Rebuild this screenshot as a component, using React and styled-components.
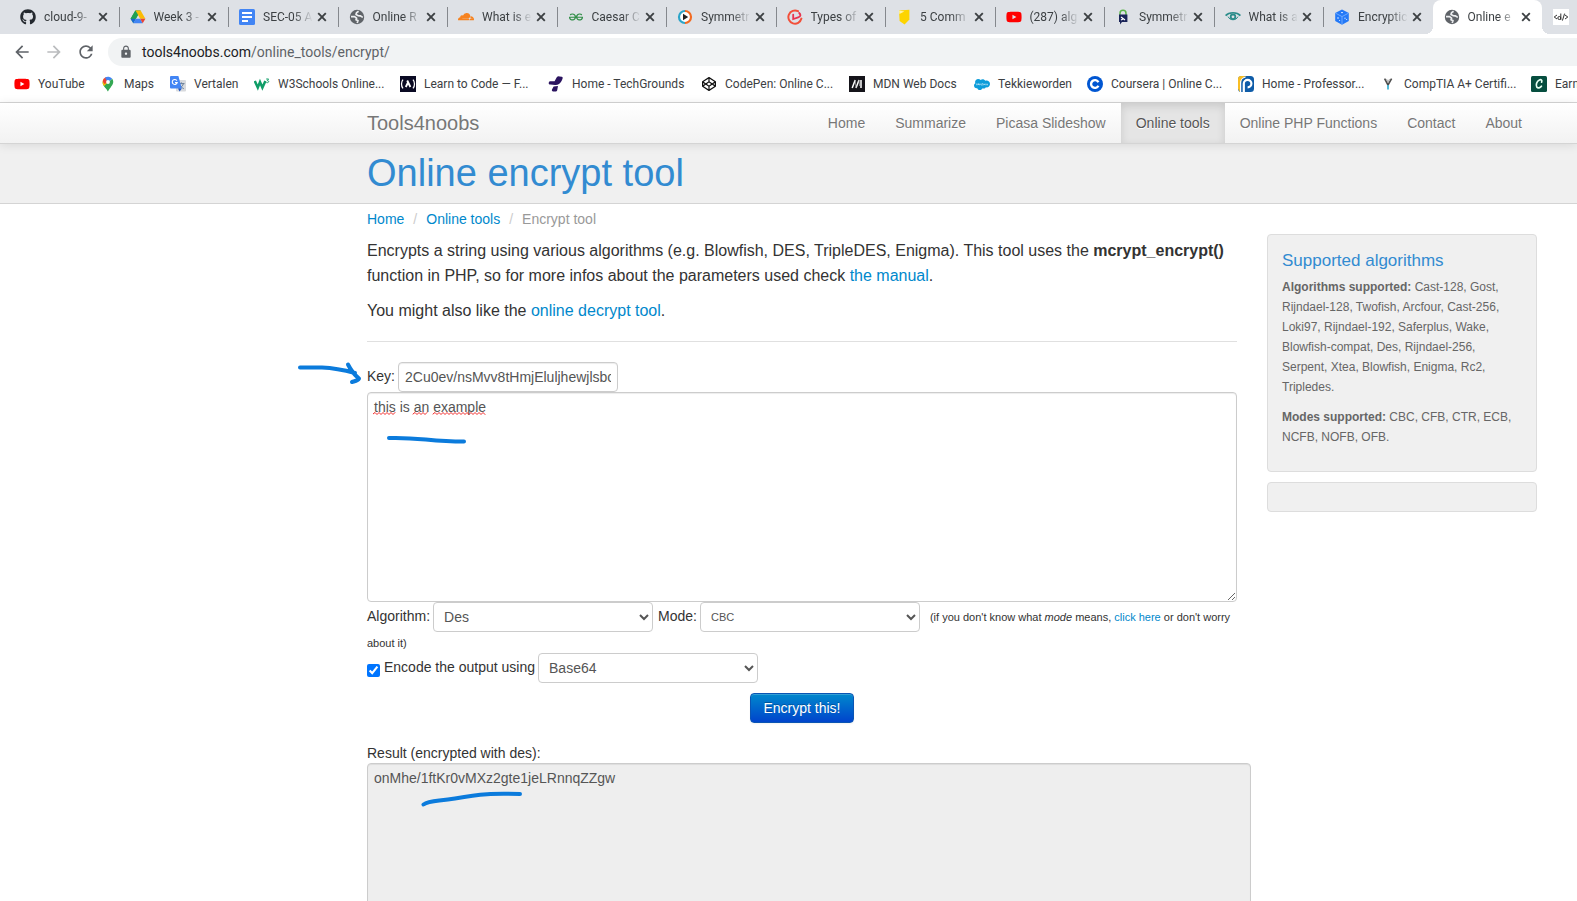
import React from "react";
import styled, { createGlobalStyle, css } from "styled-components";
import { FaGithub, FaYoutube, FaCloudflare, FaCodepen, FaSalesforce } from "react-icons/fa";
import { MdArrowBack, MdArrowForward, MdRefresh, MdLock } from "react-icons/md";
import { SiGeeksforgeeks } from "react-icons/si";

const uiFont = 'Roboto, "Open Sans", sans-serif';
const pageFont = '"Liberation Sans", Arial, sans-serif';

const Global = createGlobalStyle`
  *, *::before, *::after { box-sizing: border-box; }
  body {
    margin: 0;
    background: #fff;
    color: #333;
    font: 14px/20px ${pageFont};
  }
  p { margin: 0; }
  a { color: #0088cc; text-decoration: none; }
`;

const Window = styled.div`
  display: flex;
  flex-direction: column;
  height: 100vh;
  overflow: hidden;
`;

/* ---------- browser chrome ---------- */

const Chrome = styled.div`
  flex: none;
  font-family: ${uiFont};
  color: #3c4043;
  border-bottom: 1px solid #d6d6d6;
`;

const TabStrip = styled.div`
  display: flex;
  height: 34px;
  padding-left: 9px;
  background: #dee1e6;
`;

const flare = css`
  content: "";
  position: absolute;
  bottom: 0;
  width: 8px;
  height: 8px;
`;

const Tab = styled.div`
  position: relative;
  display: flex;
  flex: 1 1 0;
  min-width: 0;
  align-items: center;
  padding: 0 11px;
  ${(p) =>
    p.$divider &&
    css`
      &::after {
        content: "";
        position: absolute;
        right: -1px;
        top: 7px;
        width: 1px;
        height: 20px;
        background: #85888d;
      }
    `}
  ${(p) =>
    p.$active &&
    css`
      background: #fff;
      border-radius: 8px 8px 0 0;
      &::before {
        ${flare}
        left: -8px;
        background: radial-gradient(circle at 0 0, transparent 8px, #fff 8px);
      }
      &::after {
        ${flare}
        right: -8px;
        background: radial-gradient(circle at 100% 0, transparent 8px, #fff 8px);
      }
    `}
`;

const TabTitle = styled.span`
  flex: 1;
  min-width: 0;
  margin: 0 3px 0 8px;
  overflow: hidden;
  white-space: nowrap;
  font-size: 12px;
  line-height: 16px;
  mask-image: linear-gradient(to right, #000 60%, transparent 98%);
`;

const TabClose = styled.button`
  display: flex;
  flex: none;
  padding: 0;
  border: 0;
  background: none;
  color: #3c4043;
`;

const PinnedTab = styled.div`
  display: flex;
  flex: none;
  align-items: center;
  width: 35px;
  padding-left: 11px;
`;

const IconBox = styled.span`
  display: flex;
  flex: none;
  align-items: center;
  justify-content: center;
  width: 16px;
  height: 16px;
`;

const Toolbar = styled.div`
  display: flex;
  align-items: center;
  padding: 4px 0 0 12px;
`;

const ToolButton = styled.button`
  display: flex;
  padding: 0;
  margin-right: 12px;
  border: 0;
  background: none;
  color: ${(p) => (p.disabled ? "#babcbe" : "#5f6368")};
`;

const AddressBar = styled.div`
  display: flex;
  flex: 1;
  align-items: center;
  gap: 9px;
  height: 28px;
  padding-left: 11px;
  border-radius: 14px 0 0 14px;
  background: #f1f3f4;
  color: #5f6368;
  font-size: 14px;
`;

const Url = styled.span`
  color: #5f6368;
  line-height: 20px;
  b {
    font-weight: 400;
    color: #202124;
  }
`;

const Bookmarks = styled.nav`
  display: flex;
  gap: 17px;
  height: 36px;
  align-items: center;
  padding-left: 14px;
  overflow: hidden;
`;

const Bookmark = styled.a`
  display: flex;
  flex: none;
  gap: 8px;
  align-items: center;
  color: #3c4043;
  font-size: 12px;
  line-height: 16px;
  white-space: nowrap;
`;

const BookmarkLabel = styled.span`
  width: ${(p) => p.$width}px;
`;

/* ---------- site ---------- */

const Site = styled.div`
  flex: 1;
  min-height: 0;
`;

const Container = styled.div`
  display: flex;
  padding: 0 40px 0 367px;
`;

const NavBar = styled.header`
  position: relative;
  height: 41px;
  border-bottom: 1px solid #d4d4d4;
  background: linear-gradient(to bottom, #ffffff, #f2f2f2);
  box-shadow: 0 1px 10px rgba(0, 0, 0, 0.1);
`;

const Brand = styled.a`
  flex: 1;
  font-size: 20px;
  line-height: 40px;
  color: #777;
  text-shadow: 0 1px 0 #fff;
`;

const NavLink = styled.a`
  padding: 0 15px;
  line-height: 40px;
  color: ${(p) => (p.$active ? "#555" : "#777")};
  text-shadow: 0 1px 0 #fff;
  ${(p) =>
    p.$active &&
    css`
      background: #e5e5e5;
      box-shadow: inset 0 3px 8px rgba(0, 0, 0, 0.125);
    `}
`;

const TitleBand = styled.div`
  background: #f0f0f0;
  border-bottom: 1px solid #d4d4d4;
`;

const PageTitle = styled.h1`
  margin: 0;
  padding: 9px 0 10px;
  font-size: 38px;
  font-weight: 400;
  line-height: 40px;
  color: #328bd1;
`;

const Columns = styled(Container)`
  gap: 30px;
`;

const Main = styled.main`
  flex: 1;
  min-width: 0;
  padding-top: 5px;
`;

const Breadcrumb = styled.nav`
  display: flex;
  gap: 9px;
  margin-bottom: 9px;
  color: #999;
  i {
    color: #ccc;
    font-style: normal;
  }
`;

const Lead = styled.p`
  margin-bottom: 10px;
  font-size: 16px;
  line-height: 25px;
`;

const Rule = styled.hr`
  margin: 18px 0 20px;
  border: 0;
  border-top: 1px solid #e0e0e0;
`;

const Field = styled.div`
  position: relative;
`;

const Label = styled.label`
  margin-right: 3px;
`;

const control = css`
  border: 1px solid #ccc;
  border-radius: 4px;
  background: #fff;
  color: #555;
  font: 14px/20px ${pageFont};
  vertical-align: middle;
`;

const TextInput = styled.input`
  ${control}
  width: 220px;
  height: 30px;
  padding: 4px 6px;
  box-shadow: inset 0 1px 1px rgba(0, 0, 0, 0.075);
`;

const TextArea = styled.textarea`
  ${control}
  display: block;
  width: 100%;
  height: 210px;
  padding: 4px 6px;
  box-shadow: inset 0 1px 1px rgba(0, 0, 0, 0.075);
`;

const ResultArea = styled(TextArea)`
  width: calc(100% + 14px);
  background: #eee;
`;

const Select = styled.select`
  ${control}
  width: 220px;
  height: 30px;
  padding: 4px 6px;
  margin-right: ${(p) => (p.$small ? 10 : 5)}px;
  font-size: ${(p) => (p.$small ? 11 : 14)}px;
`;

const Hint = styled.small`
  font-size: 11px;
`;

const Check = styled.input`
  width: 13px;
  height: 13px;
  margin: 4px 4px 0 0;
  vertical-align: middle;
`;

const Actions = styled.div`
  display: flex;
  justify-content: center;
  margin: 10px 0 20px;
`;

const Submit = styled.button`
  height: 30px;
  padding: 4px 12px;
  border: 1px solid #0a55b4;
  border-radius: 4px;
  background: linear-gradient(to bottom, #0088cc, #0044cc);
  box-shadow: inset 0 1px 0 rgba(255, 255, 255, 0.2), 0 1px 2px rgba(0, 0, 0, 0.05);
  color: #fff;
  font: 14px/20px ${pageFont};
  text-shadow: 0 -1px 0 rgba(0, 0, 0, 0.25);
`;

const Sidebar = styled.aside`
  display: flex;
  flex: none;
  flex-direction: column;
  gap: 10px;
  width: 270px;
  padding-top: 30px;
`;

const Panel = styled.section`
  min-height: 30px;
  padding: ${(p) => (p.$empty ? "14px" : "16px 14px 14px")};
  border: 1px solid #ddd;
  border-radius: 4px;
  background: #f0f0f0;
  color: #666;
  font-size: 12px;
  line-height: 20px;
  p {
    margin-bottom: 10px;
  }
`;

const PanelTitle = styled.h2`
  margin: 0 0 6px;
  font-size: 17px;
  font-weight: 400;
  line-height: 20px;
  color: #328bd1;
`;

/* pen strokes and spelling marks lie over the form */
const Overlay = styled.svg`
  position: absolute;
  left: ${(p) => p.$left}px;
  top: ${(p) => p.$top}px;
  pointer-events: none;
  fill: none;
  stroke: #0b7bdc;
  stroke-width: 4;
  stroke-linecap: round;
  stroke-linejoin: round;
`;

const SpellingMarks = styled(Overlay)`
  stroke: #f02b2b;
  stroke-width: 1;
`;

/* ---------- icons ---------- */

const Svg = (props) => <svg width="16" height="16" viewBox="0 0 16 16" aria-hidden="true" {...props} />;

const Cross = () => (
  <svg width="10" height="10" viewBox="0 0 10 10" aria-hidden="true">
    <path d="M1.200 1.200l7.600 7.600M8.800 1.200L1.200 8.800" fill="none" stroke="currentColor" strokeWidth="1.900" />
  </svg>
);
const Globe = () => (
  <Svg>
    <circle cx="8" cy="8" r="7.2" fill="#5f6368" />
    <path d="M9.6 2.2 7.6 3.6 7 5.4 9 6.6l2.2.2 2.6 1.6M2 7.6h3.6l2 1.6-.6 1.6 2 .8-.8 2.4" fill="none" stroke="#eceef0" strokeWidth="1.7" strokeLinejoin="round" />
  </Svg>
);
const Drive = () => (
  <Svg>
    <path d="M5.4 1.5h5.2L8 6z" fill="#188038" />
    <path d="M5.4 1.5 8 6 3.3 14.3.6 9.8z" fill="#34a853" />
    <path d="M10.6 1.5 15.4 9.8h-5.2L5.4 1.5z" fill="#fbbc04" />
    <path d="M5.4 1.5 8 6 5.8 9.8H.6z" fill="#20a152" />
    <path d="M.6 9.8h5.2L3.3 14.3z" fill="#1967d2" />
    <path d="M5.8 9.8h4.4l2.5 4.5H3.3z" fill="#4285f4" />
    <path d="M10.2 9.8h5.2l-2.7 4.5z" fill="#ea4335" />
  </Svg>
);
const Docs = () => (
  <Svg>
    <rect width="16" height="16" rx="1.5" fill="#4285f4" />
    <path d="M3 4h10M3 8h10M3 12h6" stroke="#fff" strokeWidth="1.8" />
  </Svg>
);
const PlayRing = () => (
  <Svg>
    <circle cx="8" cy="8" r="6" fill="#fff" />
    <path d="M8 14A6 6 0 0 1 8 2" fill="none" stroke="#2ca5c9" strokeWidth="2.2" />
    <path d="M8 2a6 6 0 0 1 0 12" fill="none" stroke="#f26a21" strokeWidth="2.2" />
    <path d="M6 4.8 11.2 8 6 11.2z" fill="#222" />
  </Svg>
);
const RedSwirl = () => (
  <Svg fill="none" stroke="#f0433f" strokeWidth="2" strokeLinecap="round">
    <path d="M14.400 9.600A6.600 6.600 0 1 1 11 2.200" stroke="#f2503a" />
    <path d="M6.200 5.600v4.400l5-1.600c3-1 2.600-2.800 1-4.400" stroke="#e8344e" strokeWidth="1.800" />
  </Svg>
);
const Shield = () => (
  <Svg>
    <path d="M3 1.600 13.400.8v9.600L8.600 15.400 3.600 12z" fill="#fdd400" />
    <path d="M3 1.600 8.400 2.400 3.400 5z" fill="#fff3a8" />
  </Svg>
);
const PadLock = () => (
  <Svg>
    <path d="M5 6V4.200a3 3 0 0 1 6 0V6" fill="none" stroke="#5cb54a" strokeWidth="1.500" />
    <path d="M4 5.600h8.400V13H7l-2 2.600V13H4z" fill="#1b2559" />
    <path d="M6 8l4 3M6 11l2-1" stroke="#fff" strokeWidth="1.200" />
  </Svg>
);
const Eye = () => (
  <Svg fill="none" stroke="#2a8c8a">
    <path d="M.6 6.600C4 2.800 12 2.800 15.400 6.600" strokeWidth="1.600" />
    <path d="M3 7.600c2 4.200 8 4.200 10 0" strokeWidth="1" />
    <circle cx="8" cy="7.800" r="2.300" strokeWidth="1.800" />
  </Svg>
);
const Cube = () => (
  <Svg>
    <path d="M8 .4 14.800 4v8L8 15.700 1.200 12V4z" fill="#2479f7" />
    <path d="M1.600 4.200 8 7.600l6.400-3.400M8 7.600v7.600" fill="none" stroke="#83b6ff" strokeWidth=".8" />
    <path d="M7 3.600h2M4 8v2M5.600 11v1M11 8.600v1.500M12.600 10v1" stroke="#cfe2ff" strokeWidth="1" />
  </Svg>
);
const CodeMark = () => (
  <Svg>
    <rect width="16" height="16" fill="#fff" />
    <path d="M4 6 1.200 8 4 10M12 6l2.800 2L12 10M11.600 4.600 9.400 11.600M7.800 4.500v6.500" fill="none" stroke="#333" strokeWidth="1" />
    <circle cx="6.300" cy="9" r="1.500" fill="none" stroke="#333" />
  </Svg>
);
const MapsPin = () => (
  <Svg>
    <path d="M8 15.600c-.8-3-5.400-5-5.400-9.400h5.400z" fill="#34a853" />
    <path d="M2.600 6.200A5.400 5.400 0 0 1 4 2.400L8 6.200 4.200 10C3.200 8.800 2.600 7.600 2.600 6.200z" fill="#fbbc04" />
    <path d="M2.700 5.600A5.300 5.300 0 0 1 6.400 1L8 6 4.600 8z" fill="#ea4335" />
    <path d="M5 1.700a5.400 5.400 0 0 1 7.200 1.100L8 6.800z" fill="#4285f4" />
    <path d="M12.200 2.800c2.400 3.600.2 6.400-1.400 8.400-1.400 1.700-2.200 3-2.800 4.400C7.600 14 6 12.200 4.400 10.200z" fill="#34a853" />
    <circle cx="8" cy="6" r="1.900" fill="#fff" />
  </Svg>
);
const Translate = () => (
  <Svg>
    <rect x="6" y="4" width="10" height="11.600" rx="1" fill="#d8dadd" />
    <path d="M8.500 7.600h6M11.400 6.400v1.200M13.400 7.600c-.6 2.200-2 3.800-4 4.800M10 9c.8 1.800 2 2.800 3.800 3.600" fill="none" stroke="#6a7f99" strokeWidth="1" />
    <path d="M1 0h7.400l3.400 12.600H1a1 1 0 0 1-1-1V1a1 1 0 0 1 1-1z" fill="#4285f4" />
    <path d="M8 12.600h3.800L9.600 15.600z" fill="#1f56c4" />
    <path d="M6.900 4.600A2.500 2.500 0 1 0 7.200 6.600H5" fill="none" stroke="#fff" strokeWidth="1.100" />
  </Svg>
);
const W3 = () => (
  <Svg fill="none" stroke="#0f9d67">
    <path d="M.8 5 3.800 11.600 6 6l2.400 5.600L11.400 5" strokeWidth="2.500" />
    <path d="M12.200 3h2.400l-1.300 1.600c2.200 0 1.800 2.600-.9 2" strokeWidth="1" />
  </Svg>
);
const FreeCode = () => (
  <Svg fill="none" stroke="#fff" strokeWidth="1.300">
    <rect width="16" height="16" fill="#0a0a23" stroke="none" />
    <path d="M3 3.600c-2 2.400-2 6.400 0 8.800M13 3.600c2 2.400 2 6.400 0 8.800" />
    <path d="M7.200 4.500 10.400 11M8 6.500 5.800 11" strokeWidth="1.900" />
  </Svg>
);
const TechGrounds = () => (
  <Svg fill="#2b1460">
    <path d="M8.600 1.600C9.200.6 10.200.2 11.400.4l2.400.4c.8.200 1 .8.800 1.600-.8 2.600-2 4.400-3.600 5.600-1.200.9-2.600 1-4 .9L2.400 8.600C1 8.500.4 7.600.8 6.400c.2-.8.8-1.200 1.800-1.200l4 .1z" />
    <path d="M5.600 10.400l4.400-.4-.8 4.200c-.2 1-1 1.500-2.200 1.400l-1.800-.1c-1.200-.1-1.600-.8-1.200-1.900z" />
  </Svg>
);
const Mdn = () => (
  <Svg>
    <rect width="16" height="16" fill="#15141a" />
    <path d="M3.200 12 6.200 4M7 12l3-8M12 12V4" fill="none" stroke="#fff" strokeWidth="1.500" />
    <path d="M6.200 4l.8 8M10 4l.6 6" fill="none" stroke="#9a9a9e" strokeWidth=".8" />
  </Svg>
);
const Coursera = () => (
  <Svg>
    <circle cx="8" cy="8" r="8" fill="#0056d2" />
    <path d="M11.400 6.200A3.900 3.900 0 1 0 11.400 9.800" fill="none" stroke="#fff" strokeWidth="2.400" />
  </Svg>
);
const Messer = () => (
  <Svg>
    <rect width="16" height="16" rx="3.500" fill="#0f5ca8" />
    <path d="M0 13V3a3 3 0 0 1 3-3h6C5 .6 3 3 3 7v9H2z" fill="#f9be24" />
    <path d="M5.800 16V7.600a3.800 3.800 0 1 1 3.800 3.800" fill="none" stroke="#fff" strokeWidth="2.200" />
    <path d="M2.600 16V7a6 6 0 0 1 5-6" fill="none" stroke="#fff" strokeWidth="1.200" />
  </Svg>
);
const Yfork = () => (
  <Svg fill="none">
    <path d="M4.600 2.600 8 9l3.600-6.400" stroke="#4d4d4d" strokeWidth="1.600" />
    <path d="M6.500 3 8 6l1.600-3" stroke="#9a9a9a" strokeWidth=".8" />
    <path d="M8 9v4.600" stroke="#42b4d6" strokeWidth="1.800" />
  </Svg>
);
const Credly = () => (
  <Svg>
    <rect width="16" height="16" rx="1.500" fill="#064e3f" />
    <path d="M10.600 6.200c.8-1.800-.4-3-2.200-2.200C5.600 5.200 4.600 9 5.800 11c1 1.600 3.400 1 4.600-.8" fill="none" stroke="#e6fff2" strokeWidth="1.700" strokeLinecap="round" />
  </Svg>
);

const YouTube = () => <FaYoutube size={18} color="#ff0000" />;

const tabs = [
  { title: "cloud-9-", icon: <FaGithub size={16} color="#24292f" /> },
  { title: "Week 3 -", icon: <Drive /> },
  { title: "SEC-05 A", icon: <Docs /> },
  { title: "Online R", icon: <Globe /> },
  { title: "What is e", icon: <FaCloudflare size={16} color="#f6821f" /> },
  { title: "Caesar C", icon: <SiGeeksforgeeks size={14} color="#2f8d46" /> },
  { title: "Symmetr", icon: <PlayRing /> },
  { title: "Types of", icon: <RedSwirl /> },
  { title: "5 Comm", icon: <Shield /> },
  { title: "(287) alg", icon: <YouTube /> },
  { title: "Symmetr", icon: <PadLock /> },
  { title: "What is a", icon: <Eye /> },
  { title: "Encryptic", icon: <Cube /> },
  { title: "Online e", icon: <Globe />, active: true },
];

const bookmarks = [
  { label: "YouTube", width: 45, icon: <YouTube /> },
  { label: "Maps", width: 29, icon: <MapsPin /> },
  { label: "Vertalen", width: 43, icon: <Translate /> },
  { label: "W3Schools Online...", width: 105, icon: <W3 /> },
  { label: "Learn to Code — F...", width: 107, icon: <FreeCode /> },
  { label: "Home - TechGrounds", width: 112, icon: <TechGrounds /> },
  { label: "CodePen: Online C...", width: 107, icon: <FaCodepen size={14} color="#111" /> },
  { label: "MDN Web Docs", width: 84, icon: <Mdn /> },
  { label: "Tekkieworden", width: 72, icon: <FaSalesforce size={17} color="#0d9dda" /> },
  { label: "Coursera | Online C...", width: 110, icon: <Coursera /> },
  { label: "Home - Professor...", width: 101, icon: <Messer /> },
  { label: "CompTIA A+ Certifi...", width: 110, icon: <Yfork /> },
  { label: "Earn", width: 40, icon: <Credly /> },
];

const navItems = ["Home", "Summarize", "Picasa Slideshow", "Online tools", "Online PHP Functions", "Contact", "About"];

function squiggle(from, to) {
  let d = `M${from} 2`;
  for (let x = from + 2, up = true; x <= to; x += 2, up = !up) d += `L${x} ${up ? 0.5 : 2.5}`;
  return d;
}

function BrowserChrome() {
  return (
    <Chrome>
      <TabStrip>
        {tabs.map((t, i) => (
          <Tab key={i} $active={t.active} $divider={i < tabs.length - 2}>
            <IconBox>{t.icon}</IconBox>
            <TabTitle>{t.title}</TabTitle>
            <TabClose aria-label="Close tab">
              <Cross />
            </TabClose>
          </Tab>
        ))}
        <PinnedTab>
          <CodeMark />
        </PinnedTab>
      </TabStrip>
      <Toolbar>
        <ToolButton aria-label="Back"><MdArrowBack size={20} /></ToolButton>
        <ToolButton aria-label="Forward" disabled><MdArrowForward size={20} /></ToolButton>
        <ToolButton aria-label="Reload"><MdRefresh size={20} /></ToolButton>
        <AddressBar>
          <MdLock size={14} />
          <Url><b>tools4noobs.com</b>/online_tools/encrypt/</Url>
        </AddressBar>
      </Toolbar>
      <Bookmarks>
        {bookmarks.map((b) => (
          <Bookmark key={b.label} href="#">
            <IconBox>{b.icon}</IconBox>
            <BookmarkLabel $width={b.width}>{b.label}</BookmarkLabel>
          </Bookmark>
        ))}
      </Bookmarks>
    </Chrome>
  );
}

function EncryptForm() {
  return (
    <form onSubmit={(e) => e.preventDefault()}>
      <Field>
        <Label htmlFor="key">Key:</Label>
        <TextInput id="key" defaultValue="2Cu0ev/nsMvv8tHmjEluljhewjlsbc" />
        <Overlay width="70" height="30" $left={-72} $top={-2}>
          <path d="M5 7.500h22c12 .500 20 2 33 5.500M53 4.500c3 6 6 10 11 14-1 2-4 2.500-7 3.500" />
        </Overlay>
      </Field>
      <Field>
        <TextArea aria-label="Text to encrypt" defaultValue="this is an example" spellCheck={false} />
        <SpellingMarks width="130" height="4" $left={6} $top={20}>
          <path d={squiggle(0, 22) + squiggle(40, 55) + squiggle(60, 112)} />
        </SpellingMarks>
        <Overlay width="90" height="20" $left={16} $top={40}>
          <path d="M6 6c30-1 40 3.500 75 3.500" />
        </Overlay>
      </Field>
      <div>
        <Label htmlFor="algorithm">Algorithm:</Label>
        <Select id="algorithm"><option>Des</option></Select>
        <Label htmlFor="mode">Mode:</Label>
        <Select id="mode" $small><option>CBC</option></Select>
        <Hint>
          (if you don't know what <em>mode</em> means, <a href="#">click here</a> or don't worry about it)
        </Hint>
      </div>
      <div>
        <Check type="checkbox" id="encode" defaultChecked />
        <Label htmlFor="encode">Encode the output using</Label>
        <Select aria-label="Output encoding"><option>Base64</option></Select>
      </div>
      <Actions>
        <Submit type="submit">Encrypt this!</Submit>
      </Actions>
      <label htmlFor="result">Result (encrypted with des):</label>
      <Field>
        <ResultArea id="result" readOnly value="onMhe/1ftKr0vMXz2gte1jeLRnnqZZgw" />
        <Overlay width="110" height="22" $left={50} $top={25}>
          <path d="M6.500 16.500C12 12.500 20 13.500 38 10.500 65 5.500 75 5.500 103 6" />
        </Overlay>
      </Field>
    </form>
  );
}

export default function App() {
  return (
    <Window>
      <Global />
      <BrowserChrome />
      <Site>
        <NavBar>
          <Container>
            <Brand href="#">Tools4noobs</Brand>
            {navItems.map((item) => (
              <NavLink key={item} href="#" $active={item === "Online tools"}>{item}</NavLink>
            ))}
          </Container>
        </NavBar>
        <TitleBand>
          <Container>
            <PageTitle>Online encrypt tool</PageTitle>
          </Container>
        </TitleBand>
        <Columns>
          <Main>
            <Breadcrumb>
              <a href="#">Home</a>
              <i>/</i>
              <a href="#">Online tools</a>
              <i>/</i>
              <span>Encrypt tool</span>
            </Breadcrumb>
            <Lead>
              Encrypts a string using various algorithms (e.g. Blowfish, DES, TripleDES, Enigma). This tool uses the{" "}
              <strong>mcrypt_encrypt()</strong> function in PHP, so for more infos about the parameters used check{" "}
              <a href="#">the manual</a>.
            </Lead>
            <Lead>
              You might also like the <a href="#">online decrypt tool</a>.
            </Lead>
            <Rule />
            <EncryptForm />
          </Main>
          <Sidebar>
            <Panel>
              <PanelTitle>Supported algorithms</PanelTitle>
              <p>
                <strong>Algorithms supported:</strong> Cast-128, Gost, Rijndael-128, Twofish, Arcfour, Cast-256, Loki97,
                Rijndael-192, Saferplus, Wake, Blowfish-compat, Des, Rijndael-256, Serpent, Xtea, Blowfish, Enigma, Rc2,
                Tripledes.
              </p>
              <p>
                <strong>Modes supported:</strong> CBC, CFB, CTR, ECB, NCFB, NOFB, OFB.
              </p>
            </Panel>
            <Panel $empty />
          </Sidebar>
        </Columns>
      </Site>
    </Window>
  );
}
